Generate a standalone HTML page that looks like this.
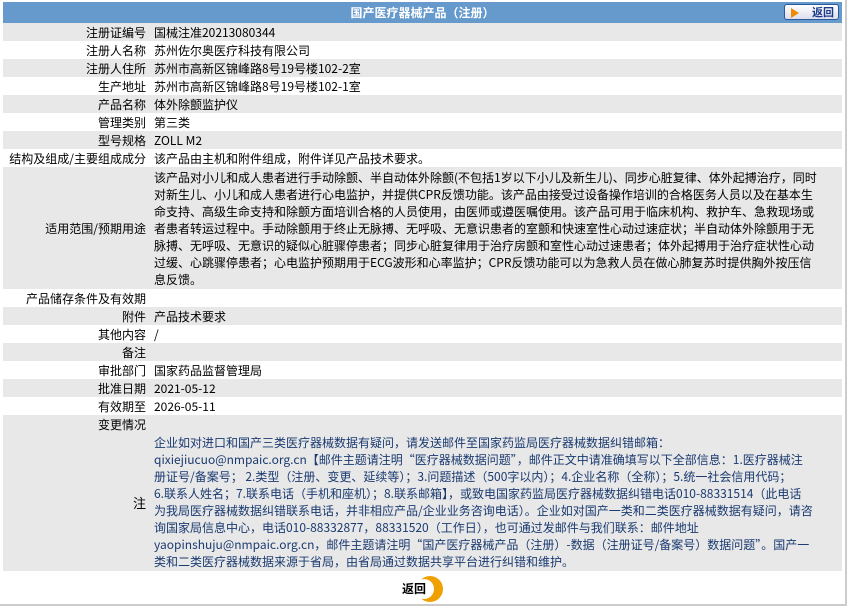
<!DOCTYPE html>
<html><head><meta charset="utf-8"><style>
body{margin:0;background:#fff;font-family:"Noto Sans CJK SC",sans-serif;font-size:12px;color:#000;width:850px;height:607px;overflow:hidden;position:relative}
.frame{position:absolute;left:0;top:0;width:845px;height:604px;border-right:2px solid #ccc;border-bottom:2px solid #ccc}
table{position:absolute;left:3px;top:2px;width:839px;border-collapse:collapse}
td{padding:0;line-height:17px;height:18px;vertical-align:middle;white-space:nowrap}
td.l{width:143px;text-align:right;padding-right:8px}
td.v{padding-left:0}
tr.g{background:#e8e8e8}
.h{background:#6699cc;color:#fff;font-weight:bold;text-align:center;height:21px;position:relative}
.btn{position:absolute;right:3px;top:2px;width:55px;height:16px;border:1px solid #2a5a9a;border-radius:3px;background:linear-gradient(#fff,#dde);color:#1a3a8a;font-size:11px;line-height:15px;text-align:right;padding-right:4px;box-sizing:border-box}
.btn i{position:absolute;left:6px;top:3px;width:0;height:0;border-left:8px solid #f08a00;border-top:5px solid transparent;border-bottom:5px solid transparent}
.n{color:#1a3a70}
.back{position:absolute;left:402px;top:576px;width:40px;height:26px;font-weight:bold;font-size:12px;line-height:26px}
.back .c{position:absolute;left:15px;top:0;width:26px;height:26px;border-radius:50%;background:#f0a000}
.back .c2{position:absolute;left:12px;top:3px;width:20px;height:20px;border-radius:50%;background:#fff}
.back span{position:absolute;left:0;top:0}
</style></head><body>
<div class="frame"></div>
<table>
<tr><td colspan="2" class="h">国产医疗器械产品（注册）<div class="btn"><i></i>返回</div></td></tr>
<tr class="g"><td class="l">注册证编号</td><td class="v">国械注准20213080344</td></tr>
<tr><td class="l">注册人名称</td><td class="v">苏州佐尔奥医疗科技有限公司</td></tr>
<tr class="g"><td class="l">注册人住所</td><td class="v">苏州市高新区锦峰路8号19号楼102-2室</td></tr>
<tr><td class="l">生产地址</td><td class="v">苏州市高新区锦峰路8号19号楼102-1室</td></tr>
<tr class="g"><td class="l">产品名称</td><td class="v">体外除颤监护仪</td></tr>
<tr><td class="l">管理类别</td><td class="v">第三类</td></tr>
<tr class="g"><td class="l">型号规格</td><td class="v">ZOLL M2</td></tr>
<tr><td class="l">结构及组成/主要组成成分</td><td class="v">该产品由主机和附件组成，附件详见产品技术要求。</td></tr>
<tr class="g"><td class="l">适用范围/预期用途</td><td class="v" style="height:122px">该产品对小儿和成人患者进行手动除颤、半自动体外除颤(不包括1岁以下小儿及新生儿)、同步心脏复律、体外起搏治疗，同时<br>对新生儿、小儿和成人患者进行心电监护，并提供CPR反馈功能。该产品由接受过设备操作培训的合格医务人员以及在基本生<br>命支持、高级生命支持和除颤方面培训合格的人员使用，由医师或遵医嘱使用。该产品可用于临床机构、救护车、急救现场或<br>者患者转运过程中。手动除颤用于终止无脉搏、无呼吸、无意识患者的室颤和快速室性心动过速症状；半自动体外除颤用于无<br>脉搏、无呼吸、无意识的疑似心脏骤停患者；同步心脏复律用于治疗房颤和室性心动过速患者；体外起搏用于治疗症状性心动<br>过缓、心跳骤停患者；心电监护预期用于ECG波形和心率监护；CPR反馈功能可以为急救人员在做心肺复苏时提供胸外按压信<br>息反馈。</td></tr>
<tr><td class="l">产品储存条件及有效期</td><td class="v"></td></tr>
<tr class="g"><td class="l">附件</td><td class="v">产品技术要求</td></tr>
<tr><td class="l">其他内容</td><td class="v">/</td></tr>
<tr class="g"><td class="l">备注</td><td class="v"></td></tr>
<tr><td class="l">审批部门</td><td class="v">国家药品监督管理局</td></tr>
<tr class="g"><td class="l">批准日期</td><td class="v">2021-05-12</td></tr>
<tr><td class="l">有效期至</td><td class="v">2026-05-11</td></tr>
<tr class="g"><td class="l">变更情况</td><td class="v"></td></tr>
<tr class="g"><td class="l" style="font-size:13px">注</td><td class="v n" style="height:138px">企业如对进口和国产三类医疗器械数据有疑问，请发送邮件至国家药监局医疗器械数据纠错邮箱：<br>qixiejiucuo@nmpaic.org.cn【邮件主题请注明“医疗器械数据问题”，邮件正文中请准确填写以下全部信息：1.医疗器械注<br>册证号/备案号； 2.类型（注册、变更、延续等）；3.问题描述（500字以内）；4.企业名称（全称）；5.统一社会信用代码；<br>6.联系人姓名；7.联系电话（手机和座机）；8.联系邮箱】，或致电国家药监局医疗器械数据纠错电话010-88331514（此电话<br>为我局医疗器械数据纠错联系电话，并非相应产品/企业业务咨询电话）。企业如对国产一类和二类医疗器械数据有疑问，请咨<br>询国家局信息中心，电话010-88332877，88331520（工作日），也可通过发邮件与我们联系：邮件地址<br>yaopinshuju@nmpaic.org.cn，邮件主题请注明“国产医疗器械产品（注册）-数据（注册证号/备案号）数据问题”。国产一<br>类和二类医疗器械数据来源于省局，由省局通过数据共享平台进行纠错和维护。</td></tr>
</table>
<div class="back"><div class="c"></div><div class="c2"></div><span>返回</span></div>
</body></html>
